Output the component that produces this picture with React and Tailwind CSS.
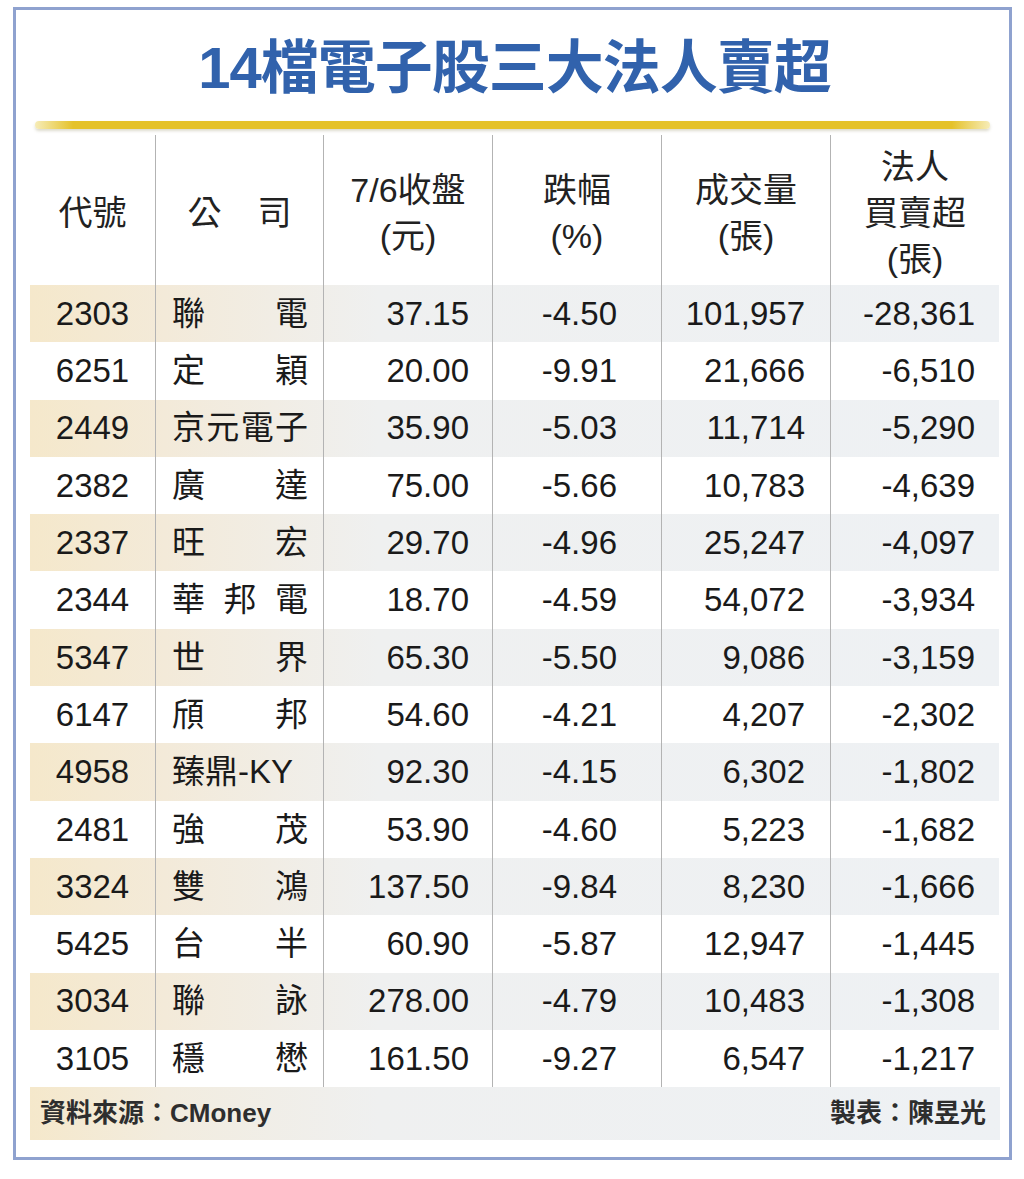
import React from 'react';

const rows = [
  ["2303", ["聯", "電"], "37.15", "-4.50", "101,957", "-28,361"],
  ["6251", ["定", "穎"], "20.00", "-9.91", "21,666", "-6,510"],
  ["2449", ["京", "元", "電", "子"], "35.90", "-5.03", "11,714", "-5,290"],
  ["2382", ["廣", "達"], "75.00", "-5.66", "10,783", "-4,639"],
  ["2337", ["旺", "宏"], "29.70", "-4.96", "25,247", "-4,097"],
  ["2344", ["華", "邦", "電"], "18.70", "-4.59", "54,072", "-3,934"],
  ["5347", ["世", "界"], "65.30", "-5.50", "9,086", "-3,159"],
  ["6147", ["頎", "邦"], "54.60", "-4.21", "4,207", "-2,302"],
  ["4958", ["臻鼎-KY"], "92.30", "-4.15", "6,302", "-1,802"],
  ["2481", ["強", "茂"], "53.90", "-4.60", "5,223", "-1,682"],
  ["3324", ["雙", "鴻"], "137.50", "-9.84", "8,230", "-1,666"],
  ["5425", ["台", "半"], "60.90", "-5.87", "12,947", "-1,445"],
  ["3034", ["聯", "詠"], "278.00", "-4.79", "10,483", "-1,308"],
  ["3105", ["穩", "懋"], "161.50", "-9.27", "6,547", "-1,217"],
];

const cols = "grid grid-cols-[125px_168px_169px_169px_169px_169px]";
const line = "border-l border-[#b3b3b3]";

const App = () => {
  return (
    <div className="w-[1024px] h-[1179px] bg-white pt-[7px] pl-[13px] font-['Liberation_Sans','Noto_Sans_CJK_TC',sans-serif] text-[#1a1a1a]">
      <div className="w-[999px] h-[1153px] border-[3px] border-[#8fa2cf] pl-[14px] pr-[10px] flex flex-col">
        {/* Title */}
        <h1 className="mt-[28px] text-center text-[58px] leading-[60px] font-bold text-[#3162ac] tracking-[-1px]">
          14檔電子股三大法人賣超
        </h1>

        {/* Yellow rule */}
        <div className="mt-[23px] ml-[5px] w-[955px] h-[8px] rounded-full bg-[linear-gradient(to_right,#f6ecb8,#e5c22a_4%,#e5c22a_96%,#f6ecb8)] shadow-[0_2px_3px_rgba(120,110,60,0.25)]"></div>

        {/* Header */}
        <div className={`${cols} mt-[6px] h-[150px] text-[34px] leading-[46px] text-[#222]`}>
          <div className="flex items-center justify-center pt-[6px]">代號</div>
          <div className={`${line} flex items-center justify-center gap-[36px] pt-[6px]`}>
            <span>公</span>
            <span>司</span>
          </div>
          <div className={`${line} flex flex-col items-center justify-center pt-[6px]`}>
            <span>7/6收盤</span>
            <span>(元)</span>
          </div>
          <div className={`${line} flex flex-col items-center justify-center pt-[6px]`}>
            <span>跌幅</span>
            <span>(%)</span>
          </div>
          <div className={`${line} flex flex-col items-center justify-center pt-[6px]`}>
            <span>成交量</span>
            <span>(張)</span>
          </div>
          <div className={`${line} flex flex-col items-center justify-center pt-[6px]`}>
            <span>法人</span>
            <span>買賣超</span>
            <span>(張)</span>
          </div>
        </div>

        {/* Rows */}
        {rows.map((r, i) => (
          <div
            key={r[0]}
            className={`${cols} h-[57.3px] text-[33px] ${
              i % 2 === 0
                ? "bg-[linear-gradient(to_right,#f5e8cb_0%,#f3ead9_14%,#eff0f0_36%,#eef1f4_100%)]"
                : "bg-white"
            }`}
          >
            <div className="flex items-center justify-center">{r[0]}</div>
            <div className={`${line} flex items-center justify-between pl-[16px] pr-[15px]`}>
              {r[1].map((c, k) => (
                <span key={k}>{c}</span>
              ))}
            </div>
            <div className={`${line} flex items-center justify-end pr-[23px]`}>{r[2]}</div>
            <div className={`${line} flex items-center justify-end pr-[44px]`}>{r[3]}</div>
            <div className={`${line} flex items-center justify-end pr-[25px]`}>{r[4]}</div>
            <div className={`${line} flex items-center justify-end pr-[24px]`}>{r[5]}</div>
          </div>
        ))}

        {/* Footer */}
        <div className="w-[970px] h-[53px] flex items-center justify-between pl-[10px] pr-[14px] text-[26px] font-semibold text-[#2e2e2e] bg-[linear-gradient(to_right,#f5e8cb_0%,#f2ecdf_14%,#eff0f0_36%,#eef1f4_100%)]">
          <span>資料來源：CMoney</span>
          <span>製表：陳昱光</span>
        </div>
      </div>
    </div>
  );
};

export default App;
